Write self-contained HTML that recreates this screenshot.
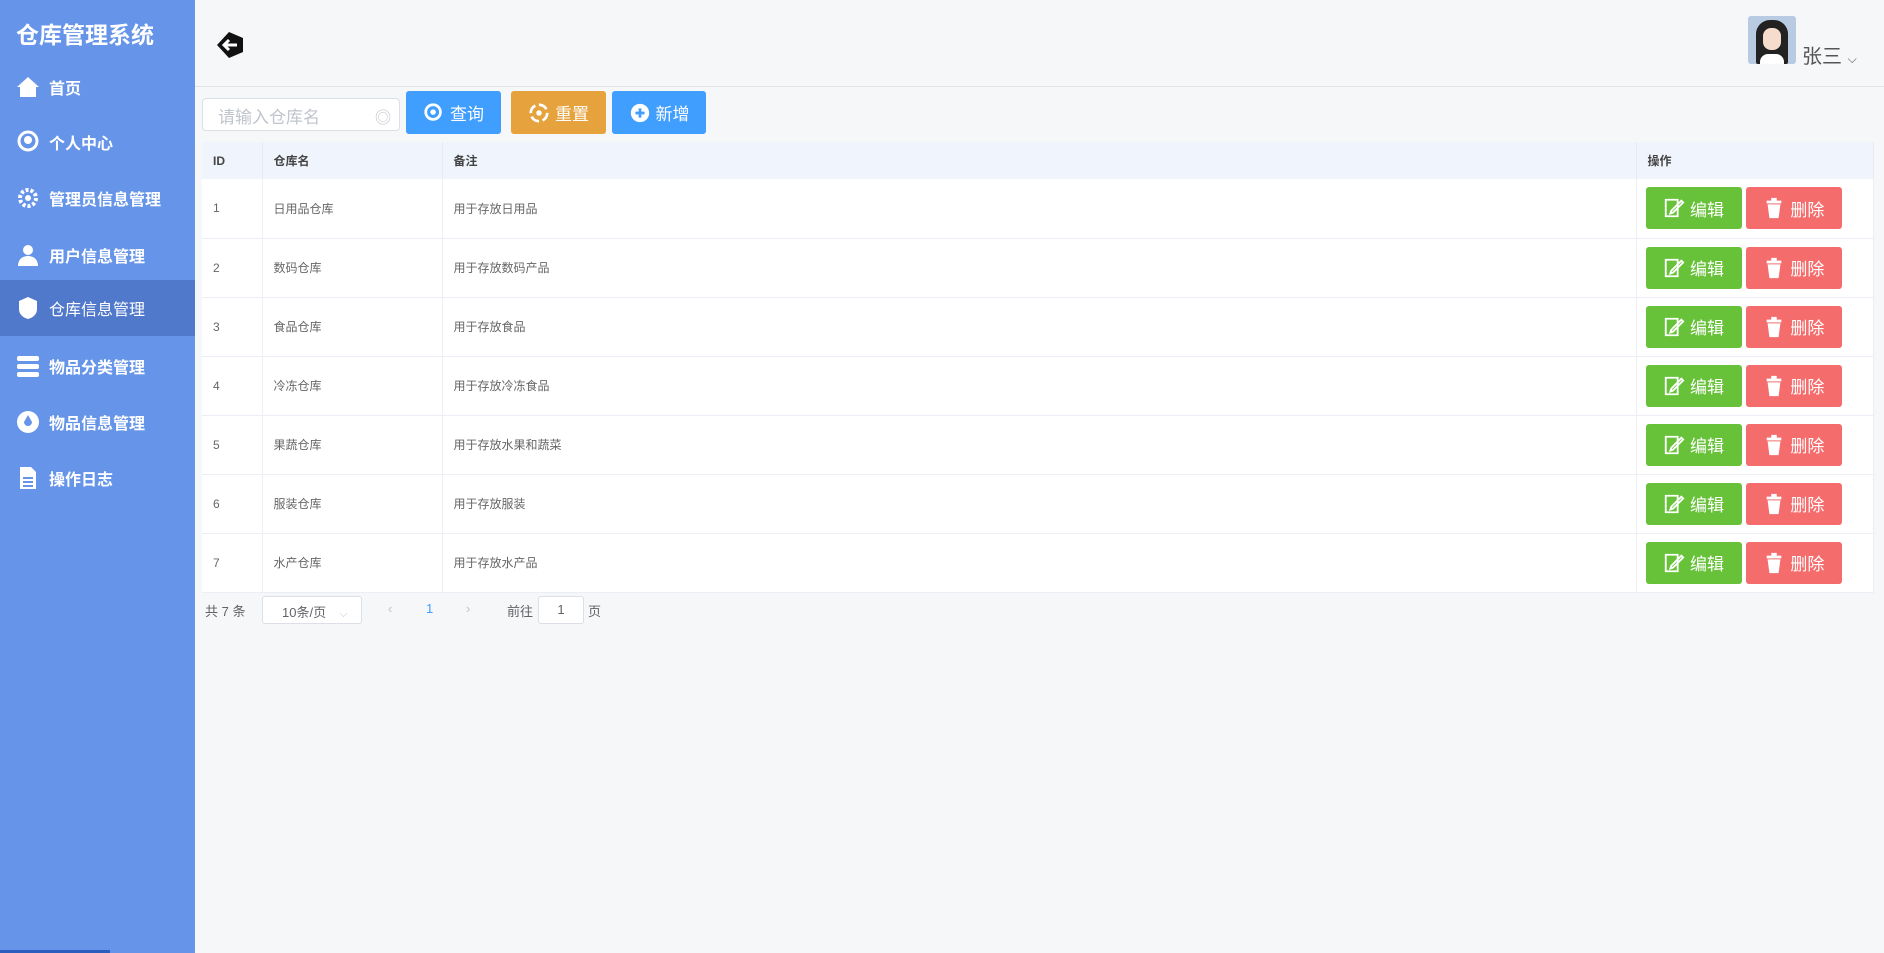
<!DOCTYPE html>
<html><head><meta charset="utf-8"><style>
*{margin:0;padding:0;box-sizing:border-box}
body{width:1884px;height:953px;overflow:hidden;font-family:"Liberation Sans","Noto Sans CJK SC",sans-serif;background:#f5f7f8;position:relative;color:#606266}
.side{position:absolute;left:0;top:0;width:195px;height:953px;background:#6694e8}
.title{position:absolute;left:16px;top:16px;color:#fff;font-size:23px;font-weight:bold}
.mi{position:absolute;left:0;width:195px;height:56px;color:#fff;font-size:16px;font-weight:bold;display:flex;align-items:center;padding-left:16px}
.mi.act{background:#5079cc;font-weight:normal}
.mi svg{width:24px;height:24px;margin-right:9px;fill:#fff}
.hdr{position:absolute;left:195px;top:0;right:0;height:87px;border-bottom:1px solid #e2e4e8;background:#f6f7f8}
.btn{position:absolute;top:91px;height:43px;color:#fff;font-size:17px;display:flex;align-items:center;justify-content:center;border-radius:3px}
.btn svg{width:22px;height:22px;margin-right:5px}
table{position:absolute;left:202px;top:142px;width:1672px;border-collapse:collapse;font-size:12px;background:#fff}
th{height:37px;background:#f0f4fd;text-align:left;font-weight:bold;color:#444;padding-left:11px;border-right:1px solid #e8ebf0}
td{height:59px;padding-left:11px;border-bottom:1px solid #ebeef5;border-right:1px solid #ebeef5;color:#666}
.ab{display:inline-flex;align-items:center;justify-content:center;width:96px;height:42px;border-radius:3px;color:#fff;font-size:17px;vertical-align:middle}
.ab svg{width:22px;height:22px;margin-right:5px}
.pg{position:absolute;top:596px;font-size:13px;color:#606266}
</style></head><body>
<div class="side">
<div class="title">仓库管理系统</div>
<div class="mi" style="top:59px"><svg viewBox="0 0 24 24"><path d="M12 2L1 12h3v10h16V12h3z"/></svg>首页</div>
<div class="mi" style="top:114px"><svg viewBox="0 0 24 24"><circle cx="12" cy="11" r="9" fill="none" stroke="#fff" stroke-width="3"/><circle cx="12" cy="10" r="4"/></svg>个人中心</div>
<div class="mi" style="top:170px"><svg viewBox="0 0 24 24"><circle cx="12" cy="12" r="8" fill="none" stroke="#fff" stroke-width="4" stroke-dasharray="3 2"/><circle cx="12" cy="12" r="3"/></svg>管理员信息管理</div>
<div class="mi" style="top:227px"><svg viewBox="0 0 24 24"><circle cx="12" cy="7" r="5"/><path d="M2 23c0-7 5-10 10-10s10 3 10 10z"/></svg>用户信息管理</div>
<div class="mi act" style="top:280px"><svg viewBox="0 0 24 24"><path d="M12 1l9 4v8c0 6-5 9-9 10-4-1-9-4-9-10V5z"/></svg>仓库信息管理</div>
<div class="mi" style="top:338px"><svg viewBox="0 0 24 24"><rect x="1" y="2" width="22" height="5" rx="2"/><rect x="1" y="10" width="22" height="5" rx="2"/><rect x="1" y="18" width="22" height="5" rx="2"/></svg>物品分类管理</div>
<div class="mi" style="top:394px"><svg viewBox="0 0 24 24"><circle cx="12" cy="12" r="11"/><path d="M12 5l-4 7a4 4 0 008 0z" fill="#6694e8"/></svg>物品信息管理</div>
<div class="mi" style="top:450px"><svg viewBox="0 0 24 24"><path d="M4 1h11l5 5v17H4z"/><path d="M7 12h10M7 16h10M7 20h10" stroke="#6694e8" stroke-width="2"/></svg>操作日志</div>
</div>
<div style="position:absolute;left:0;bottom:0;width:110px;height:3px;background:#2a5fbf"></div>
<div class="hdr">
<svg style="position:absolute;left:20px;top:30px" width="32" height="30" viewBox="0 0 32 30"><path d="M14 2L2 15l12 13 14-6V8z" fill="#111"/><path d="M22 15H9m5-5l-5 5 5 5" stroke="#fff" stroke-width="3" fill="none"/></svg>
<div style="position:absolute;left:1553px;top:16px;width:48px;height:48px;border-radius:3px;background:#b9cbe3;overflow:hidden"><div style="position:absolute;left:8px;top:4px;width:32px;height:44px;background:#222;border-radius:14px 14px 2px 2px"></div><div style="position:absolute;left:15px;top:12px;width:18px;height:22px;background:#f6dccd;border-radius:8px"></div><div style="position:absolute;left:12px;top:38px;width:24px;height:12px;background:#fff;border-radius:8px 8px 0 0"></div></div>
<div style="position:absolute;left:1607px;top:40px;font-size:20px;color:#555">张三 <span style="font-size:12px">⌵</span></div>
</div>
<div style="position:absolute;left:202px;top:98px;width:198px;height:33px;background:#fff;border:1px solid #dcdfe6;border-radius:4px;font-size:17px;color:#c0c4cc;padding:4px 15px">请输入仓库名<span style="position:absolute;right:8px;top:5px;font-size:16px">◎</span></div>
<div class="btn" style="left:406px;width:95px;background:#409eff"><svg viewBox="0 0 24 24"><circle cx="11" cy="11" r="8" fill="none" stroke="#fff" stroke-width="3"/><circle cx="11" cy="11" r="3" fill="#fff"/></svg>查询</div>
<div class="btn" style="left:511px;width:95px;background:#e6a23c"><svg viewBox="0 0 24 24"><circle cx="12" cy="12" r="9" fill="none" stroke="#fff" stroke-width="3" stroke-dasharray="10 4"/><circle cx="12" cy="12" r="3" fill="#fff"/></svg>重置</div>
<div class="btn" style="left:612px;width:94px;background:#409eff"><svg viewBox="0 0 24 24"><circle cx="12" cy="12" r="10" fill="#fff"/><path d="M12 7v10M7 12h10" stroke="#409eff" stroke-width="3"/></svg>新增</div>
<table>
<tr><th style="width:60px">ID</th><th style="width:180px">仓库名</th><th style="width:1194px">备注</th><th>操作</th></tr>
<tr><td>1</td><td>日用品仓库</td><td>用于存放日用品</td><td class="o"></td></tr>
<tr><td>2</td><td>数码仓库</td><td>用于存放数码产品</td><td class="o"></td></tr>
<tr><td>3</td><td>食品仓库</td><td>用于存放食品</td><td class="o"></td></tr>
<tr><td>4</td><td>冷冻仓库</td><td>用于存放冷冻食品</td><td class="o"></td></tr>
<tr><td>5</td><td>果蔬仓库</td><td>用于存放水果和蔬菜</td><td class="o"></td></tr>
<tr><td>6</td><td>服装仓库</td><td>用于存放服装</td><td class="o"></td></tr>
<tr><td>7</td><td>水产仓库</td><td>用于存放水产品</td><td class="o"></td></tr>
</table>
<div class="pg" style="left:205px;top:601px">共 7 条</div>
<div class="pg" style="left:262px;width:100px;height:28px;border:1px solid #dcdfe6;border-radius:3px;background:#fff;padding:5px 0 0 19px">10条/页 <span style="color:#c0c4cc;margin-left:10px;font-size:10px">⌵</span></div>
<div class="pg" style="left:378px;width:106px;height:28px;padding-top:5px"><span style="position:absolute;left:10px;color:#c0c4cc">‹</span><span style="position:absolute;left:48px;color:#409eff">1</span><span style="position:absolute;left:88px;color:#c0c4cc">›</span></div>
<div class="pg" style="left:507px;top:601px">前往</div>
<div class="pg" style="left:538px;width:46px;height:28px;border:1px solid #dcdfe6;border-radius:3px;background:#fff;text-align:center;padding-top:5px">1</div>
<div class="pg" style="left:588px;top:601px">页</div>
<script>
document.querySelectorAll('td.o').forEach(function(t){t.style.paddingLeft='9px';t.innerHTML='<span class="ab" style="background:#67c23a"><svg viewBox="0 0 24 24" fill="none" stroke="#fff" stroke-width="2"><path d="M3 3h13v18H3z"/><path d="M9 15l11-11 2 2-11 11-3 1z"/></svg>编辑</span> <span class="ab" style="background:#f56c6c;margin-left:1px"><svg viewBox="0 0 24 24" fill="#fff"><path d="M4 4h16v3H4zM9 1h6v3H9zM5 8h14l-2 15H7z"/></svg>删除</span>';});
</script>
</body></html>
